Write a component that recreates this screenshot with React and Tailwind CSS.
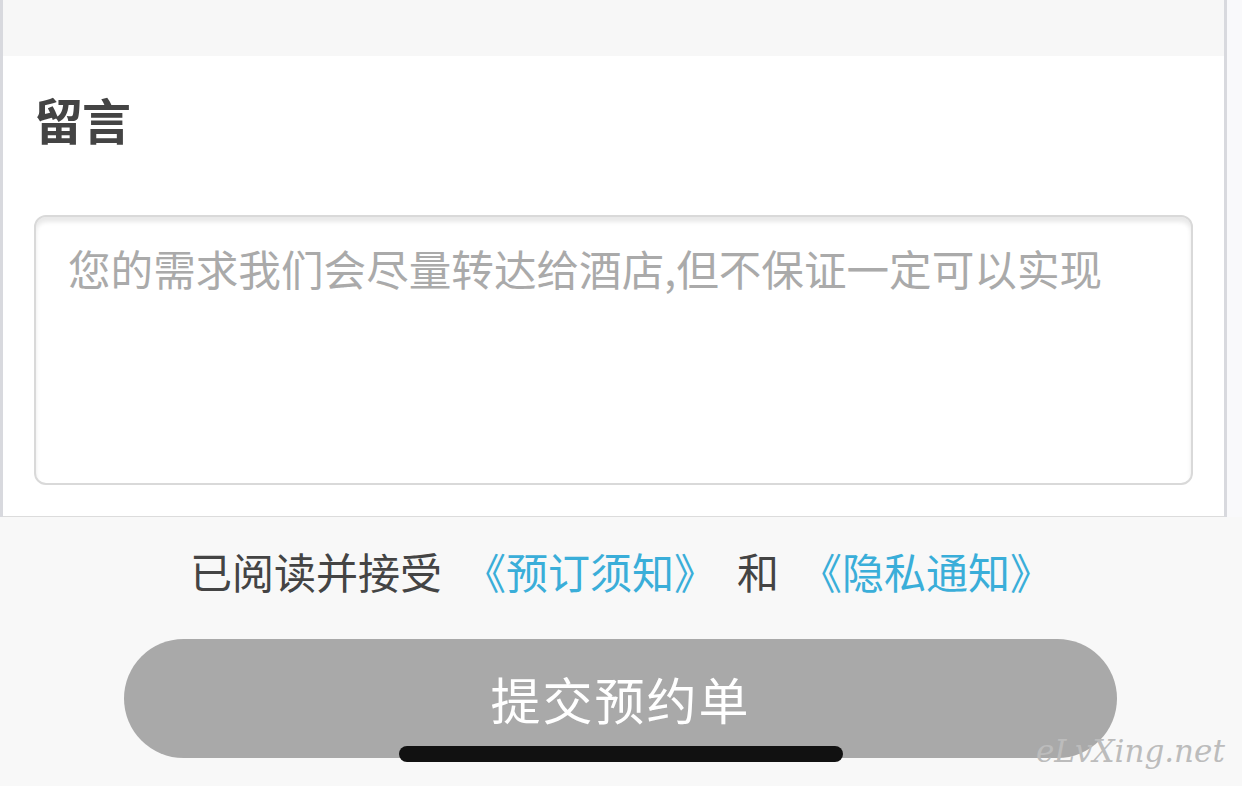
export default function App() {
  return (
    <div
      className="relative w-[1242px] h-[786px] overflow-hidden bg-[#f8f8f8]"
      style={{ fontFamily: '"Noto Sans CJK SC", "Noto Sans", sans-serif' }}
    >
      {/* Top bordered card */}
      <div className="flex">
        <div className="w-[1227px] border-l-[3px] border-r-[3px] border-[#d8d9de]">
          <div className="h-[56px] bg-[#f7f7f7]" />
          <div className="bg-white border-b border-[#dcdcdc] px-[31px] pt-[38px] pb-[31px]">
            <div className="text-[49px] leading-none font-bold text-[#444] tracking-[-1px]">留言</div>
            <div className="mt-[72px] h-[270px] rounded-[12px] border-2 border-[#d9d9d9] shadow-[inset_0_5px_4px_rgba(0,0,0,0.09)] px-[32px] pt-[30px]">
              <div className="text-[42.6px] leading-none text-[#aaaaaa] whitespace-nowrap">
                您的需求我们会尽量转达给酒店,但不保证一定可以实现
              </div>
            </div>
          </div>
        </div>
        <div className="flex-1 bg-[#f9f9fb]" />
      </div>

      {/* Agreement */}
      <div className="mt-[33px] flex justify-center text-[42px] leading-none whitespace-nowrap">
        <span className="text-[#444]">已阅读并接受</span>
        <span className="ml-[22px] text-[#3aaed9]">《预订须知》</span>
        <span className="ml-[21px] text-[#444]">和</span>
        <span className="ml-[21px] text-[#3aaed9]">《隐私通知》</span>
      </div>

      {/* Submit */}
      <div className="mt-[47px] flex justify-center pr-[1px]">
        <div className="w-[993px] h-[119px] rounded-full bg-[#a9a9a9] flex items-center justify-center text-white text-[50px] tracking-[2px]">
          提交预约单
        </div>
      </div>

      {/* Home indicator */}
      <div className="absolute left-[399px] top-[746px] w-[444px] h-[16px] rounded-full bg-[#111]" />

      {/* Watermark */}
      <div
        className="absolute left-[1036px] top-[736px] text-[31px] italic text-[#bcbcbc] leading-none"
        style={{ fontFamily: '"DejaVu Serif", serif' }}
      >
        eLvXing.net
      </div>
    </div>
  );
}
